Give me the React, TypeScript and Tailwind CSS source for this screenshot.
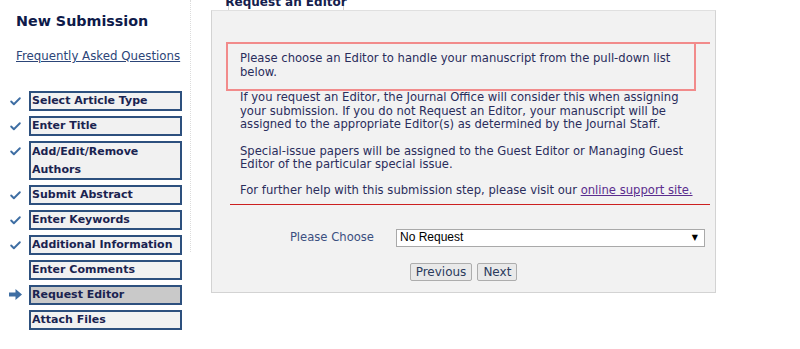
import { Check } from "lucide-react";

const STEPS = [
  { l: "Select Article Type", done: true },
  { l: "Enter Title", done: true },
  { l: "Add/Edit/Remove Authors", done: true },
  { l: "Submit Abstract", done: true },
  { l: "Enter Keywords", done: true },
  { l: "Additional Information", done: true },
  { l: "Enter Comments", done: false },
  { l: "Request Editor", done: false, cur: true },
  { l: "Attach Files", done: false },
];

const font = "font-['DejaVu_Sans',Verdana,sans-serif]";

function Arrow() {
  return (
    <svg width="13" height="11" viewBox="0 0 13 11">
      <path d="M0 3.5h6.5V0L13 5.5 6.5 11V7.5H0z" fill="#3e6ea3" />
    </svg>
  );
}

export default function App() {
  return (
    <div className={`${font} w-[800px] h-[349px] bg-white flex overflow-hidden`}>
      {/* left nav */}
      <div className="w-[191px] shrink-0 pt-[11px] border-r border-dotted border-r-[#dcdcdc] self-start h-[252px]">
        <h1 className="pl-4 text-[14.3px] font-bold text-[#0e1a4a] leading-[20px]">New Submission</h1>
        <a className="block pl-4 mt-[17px] text-[11.8px] underline text-[#2c4578] leading-[16px]">Frequently Asked Questions</a>
        <div className="mt-[27px] flex flex-col gap-[5px]">
          {STEPS.map((s) => (
            <div key={s.l} className="flex items-start">
              <div className="w-[29px] shrink-0 flex justify-center pt-[4px] pl-[2px]">
                {s.done && <Check size={13} strokeWidth={3.5} className="text-[#3e6ea3]" />}
                {s.cur && <Arrow />}
              </div>
              <div
                className={`w-[153px] border-2 border-[#2d507e] px-[1px] text-[11px] font-bold text-[#1a2350] ${s.l.length > 22 ? "leading-[17.5px]" : "leading-[16px]"} ${s.cur ? "bg-[#c9c9c9]" : "bg-[#f1f1f1]"}`}
              >
                {s.l}
              </div>
            </div>
          ))}
        </div>
      </div>

      {/* main */}
      <div className="ml-[20px] w-[505px] shrink-0">
        <div className="h-[10px] overflow-hidden flex">
          <div className="ml-[17px] w-[116px] h-[10px] bg-white border-x border-[#d3d3d3] flex items-end justify-center">
            <span className="text-[12px] font-bold text-[#14204d] leading-[12px] translate-y-[-2px] whitespace-nowrap">Request an Editor</span>
          </div>
        </div>
        <div className="h-[283px] bg-[#f2f2f2] border border-[#d3d3d3] border-t-[#e0e0e0] pt-[31px] text-[11.6px] text-[#2a2d5c] leading-[13.5px]">
          <div className="relative ml-[14px] mr-[19px] border-2 border-[#f28b8b] px-[12px] pt-[8px] pb-[8px] h-[49px]">
            <div className="absolute -top-[2px] -right-[16px] w-[16px] h-[2px] bg-[#f28b8b]" />
            Please choose an Editor to handle your manuscript from the pull-down list below.
          </div>
          <div className="pl-[28px] pr-[20px]">
            <p>If you request an Editor, the Journal Office will consider this when assigning your submission. If you do not Request an Editor, your manuscript will be assigned to the appropriate Editor(s) as determined by the Journal Staff.</p>
            <p className="mt-[13px]">Special-issue papers will be assigned to the Guest Editor or Managing Guest Editor of the particular special issue.</p>
            <p className="mt-[12px]">
              For further help with this submission step, please visit our{" "}
              <a className="underline text-[#5b2d8e]">online support site.</a>
            </p>
          </div>
          <div className="ml-[18px] mr-[5px] mt-[7px] h-px bg-[#cc2020]" />
          <div className="flex items-center mt-[24px]">
            <div className="w-[184px] text-right pr-[22px] text-[#3b4f80]">Please Choose</div>
            <div className="w-[309px] h-[18px] bg-white border border-[#a9a9a9] flex items-center justify-between pl-[3px] pr-[6px]">
              <span className="font-['Liberation_Sans',Arial,sans-serif] text-[12px] text-black">No Request</span>
              <span className="text-[8px] text-black">▼</span>
            </div>
          </div>
          <div className="flex justify-center gap-[5px] mt-[16px]">
            <button className="h-[18px] px-[5px] bg-[#e9e9e9] border border-[#adadad] rounded-[2px] text-[12px] leading-[14px] text-[#2a3a5c]">Previous</button>
            <button className="h-[18px] px-[5px] bg-[#e9e9e9] border border-[#adadad] rounded-[2px] text-[12px] leading-[14px] text-[#2a3a5c]">Next</button>
          </div>
        </div>
      </div>
    </div>
  );
}
